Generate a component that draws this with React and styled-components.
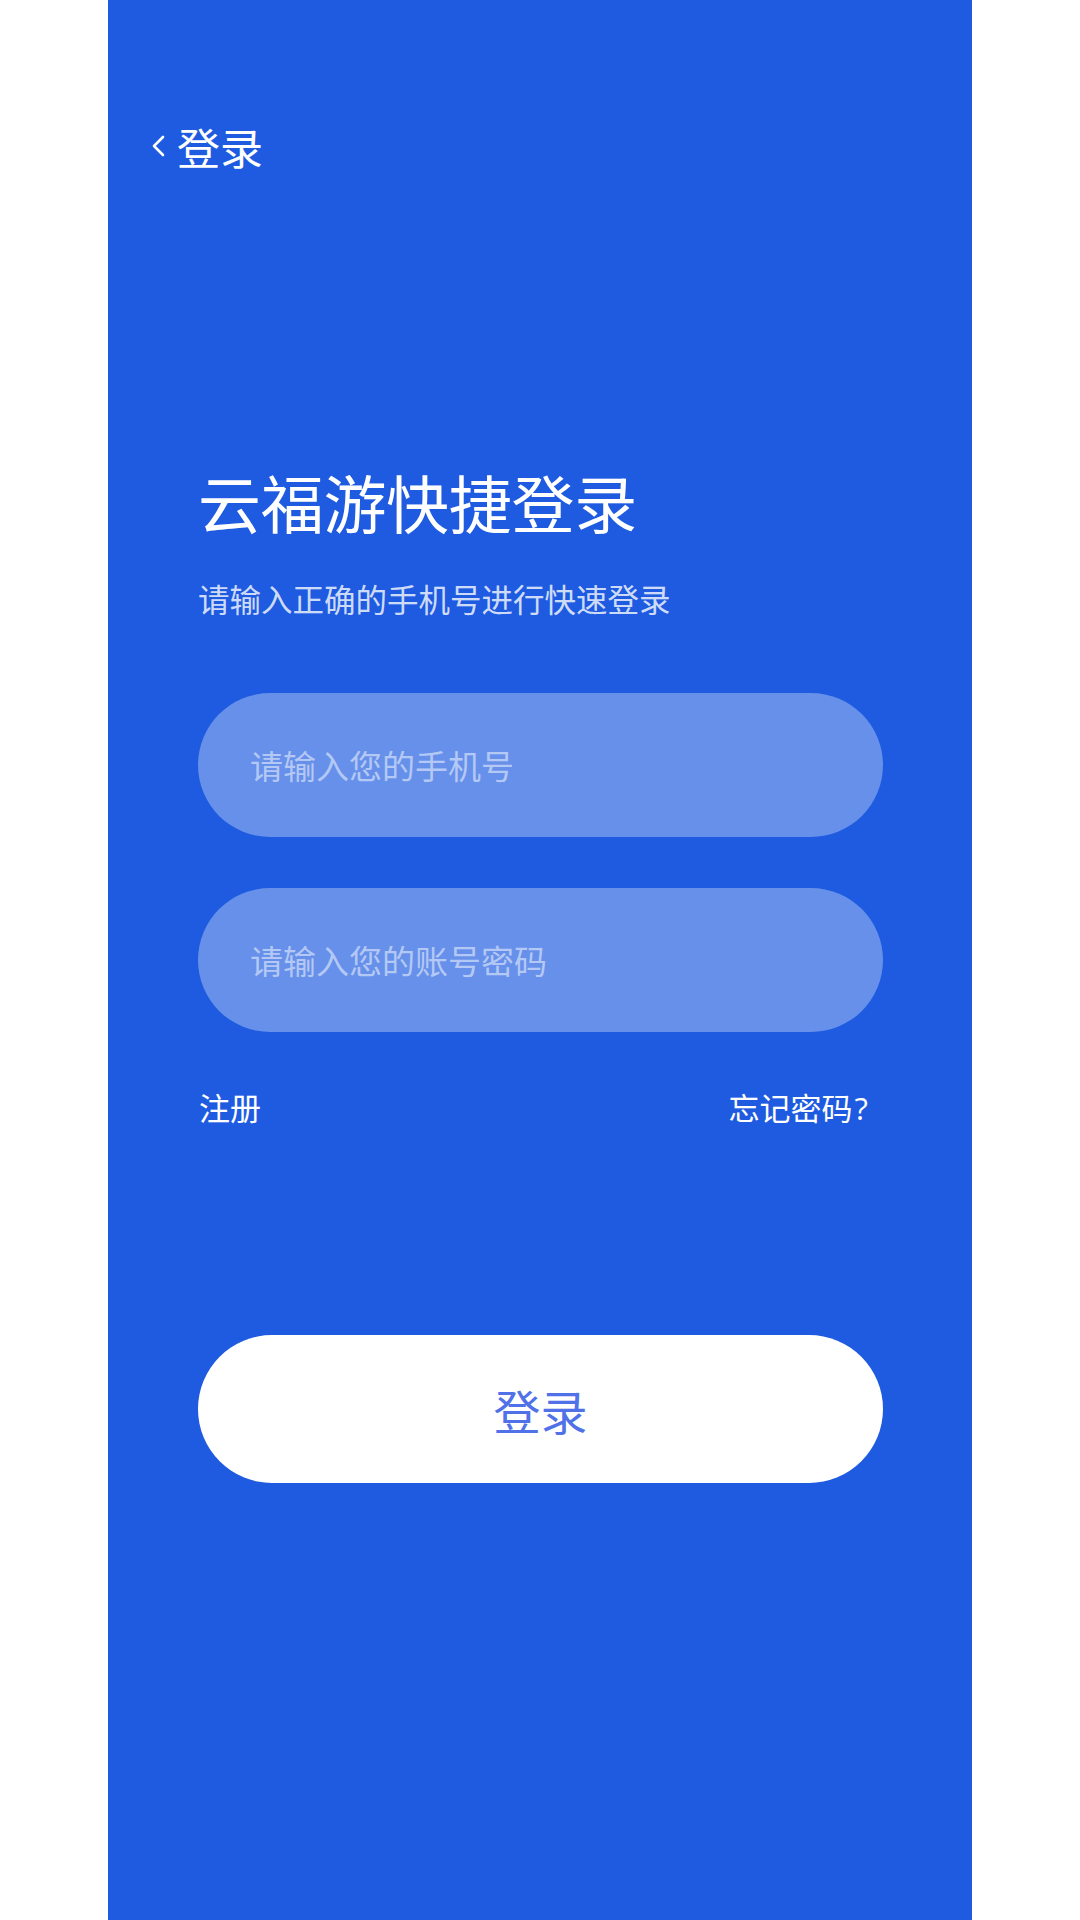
import React from "react";
import styled, { createGlobalStyle } from "styled-components";

const GlobalStyle = createGlobalStyle`
  html, body {
    margin: 0;
    padding: 0;
    background: #ffffff;
  }
  body {
    font-family: "Noto Sans CJK SC", "Noto Sans", sans-serif;
  }
  * { box-sizing: border-box; }
`;

const Page = styled.div`
  width: 1080px;
  min-height: 1920px;
  display: flex;
  justify-content: center;
  background: #ffffff;
`;

const Panel = styled.main`
  width: 864px;
  min-height: 1920px;
  background: #1e5be0;
  display: flex;
  flex-direction: column;
  padding: 125px 89px 0 90px;
`;

const Header = styled.button`
  align-self: flex-start;
  display: flex;
  align-items: center;
  gap: 9px;
  margin-left: -48px;
  padding: 0;
  border: none;
  background: transparent;
  color: #ffffff;
  font-family: inherit;
  font-size: 43px;
  line-height: 42px;
  cursor: pointer;
`;

const Title = styled.h1`
  margin: 302px 0 0;
  color: #ffffff;
  font-size: 63px;
  font-weight: 400;
  line-height: 63px;
  letter-spacing: -0.3px;
`;

const Subtitle = styled.p`
  margin: 50px 0 0;
  color: rgba(255, 255, 255, 0.8);
  font-size: 31.5px;
  line-height: 32px;
`;

const Form = styled.form`
  margin-top: 79px;
  display: flex;
  flex-direction: column;
  gap: 51px;
`;

const Field = styled.input`
  width: 100%;
  height: 144px;
  border: none;
  outline: none;
  border-radius: 72px;
  background: #6690e9;
  padding: 0 40px 0 52px;
  color: #ffffff;
  font-family: inherit;
  font-size: 33px;
  &::placeholder {
    color: #b4c8f5;
  }
`;

const LinkRow = styled.div`
  margin-top: 59px;
  display: flex;
  justify-content: space-between;
  padding: 0 15px 0 1px;
`;

const TextLink = styled.a`
  color: #ffffff;
  font-size: 31px;
  line-height: 32px;
  text-decoration: none;
  cursor: pointer;
`;

const Question = styled.span`
  font-family: "Open Sans", "Noto Sans", sans-serif;
  margin-left: 2px;
`;

const SubmitButton = styled.button`
  margin-top: 211px;
  width: 100%;
  height: 148px;
  border: none;
  border-radius: 74px;
  background: #ffffff;
  color: #5171e8;
  font-family: inherit;
  font-size: 47px;
  cursor: pointer;
`;

function ChevronLeft() {
  return (
    <svg width="18" height="24" viewBox="0 0 18 24" aria-hidden="true">
      <polyline
        points="13,3 4,12 13,21"
        fill="none"
        stroke="#ffffff"
        strokeWidth="2.6"
        strokeLinecap="round"
        strokeLinejoin="round"
      />
    </svg>
  );
}

export default function App() {
  return (
    <>
      <GlobalStyle />
      <Page>
        <Panel>
          <Header type="button">
            <ChevronLeft />
            <span>登录</span>
          </Header>
          <Title>云福游快捷登录</Title>
          <Subtitle>请输入正确的手机号进行快速登录</Subtitle>
          <Form onSubmit={(e) => e.preventDefault()}>
            <Field type="tel" placeholder="请输入您的手机号" />
            <Field type="password" placeholder="请输入您的账号密码" />
          </Form>
          <LinkRow>
            <TextLink>注册</TextLink>
            <TextLink>
              忘记密码<Question>?</Question>
            </TextLink>
          </LinkRow>
          <SubmitButton type="button">登录</SubmitButton>
        </Panel>
      </Page>
    </>
  );
}
